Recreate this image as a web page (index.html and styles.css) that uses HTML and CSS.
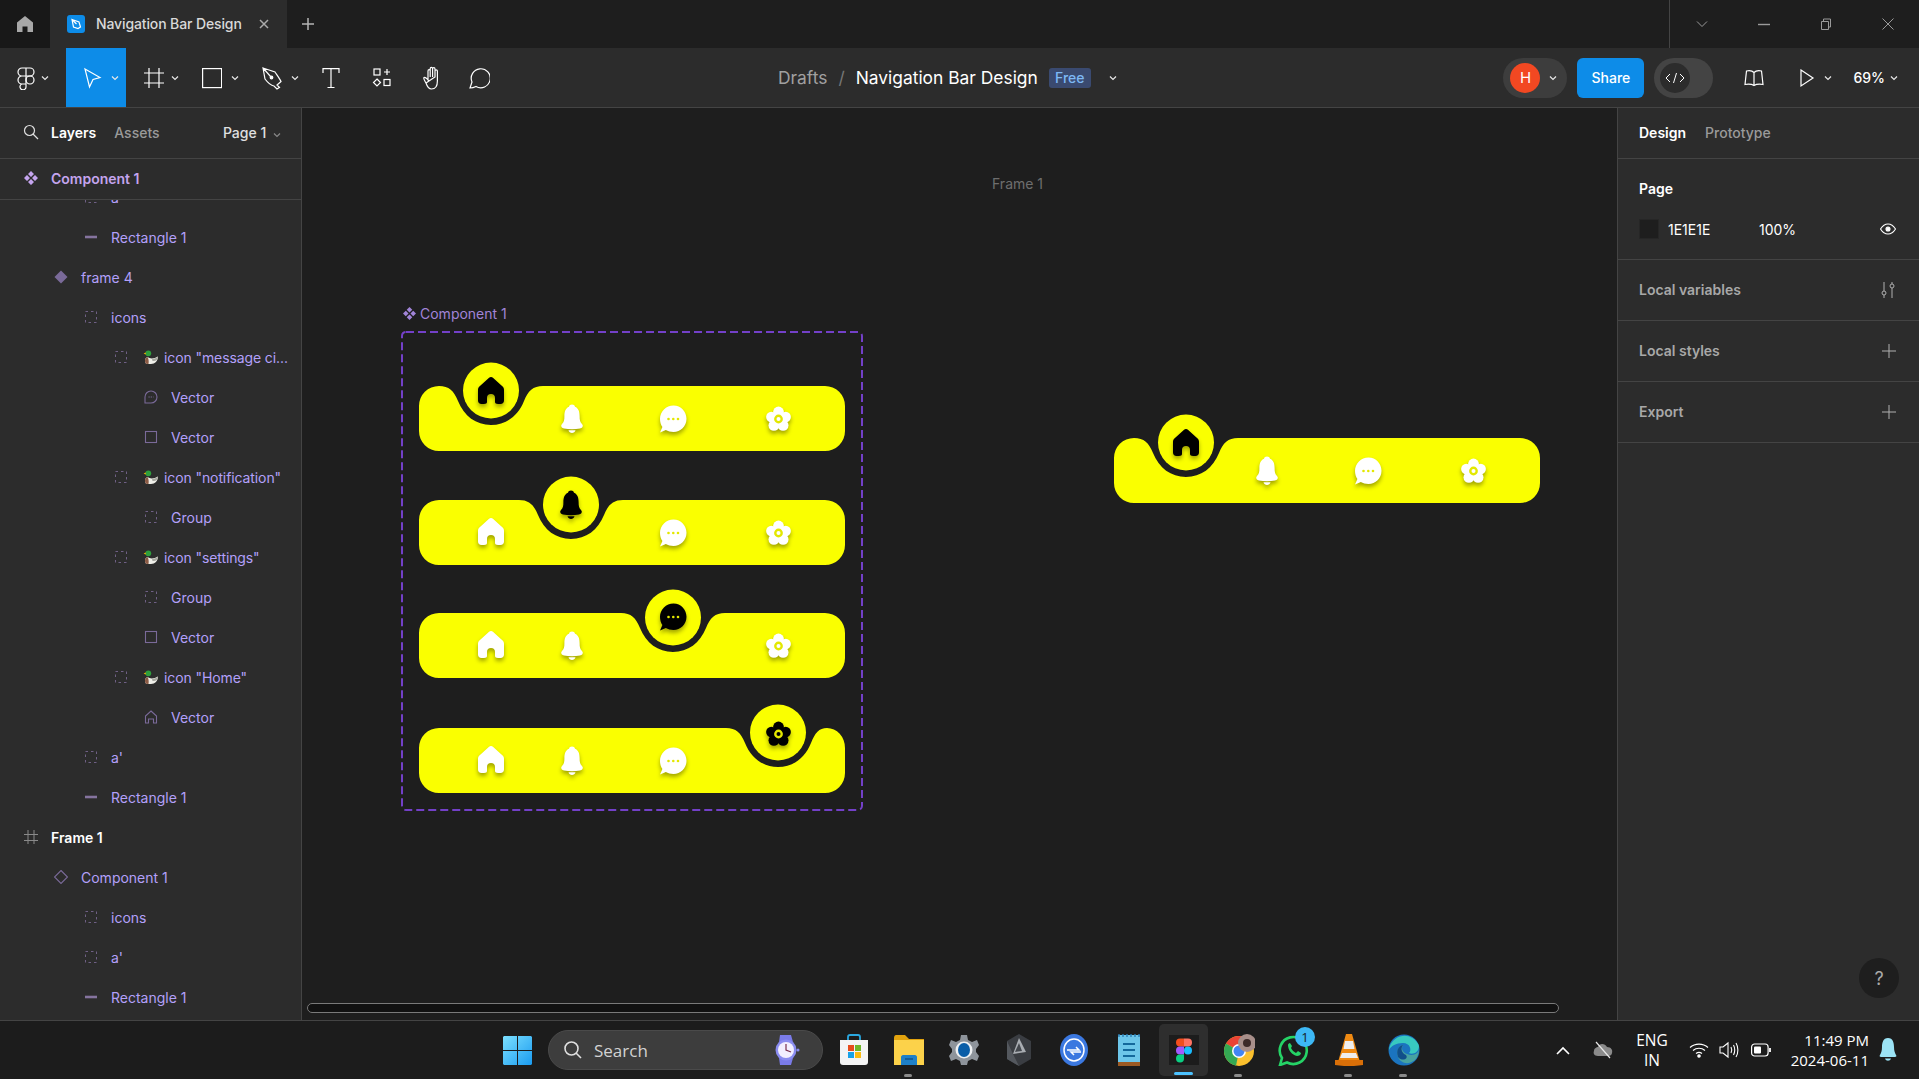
FILE: index.html
```html
<!DOCTYPE html>
<html lang="en">
<head>
<meta charset="utf-8">
<title>Navigation Bar Design</title>
<link rel="stylesheet" href="styles.css">
</head>
<body>
<svg class="defs" width="0" height="0" aria-hidden="true">
  <defs>
    <g id="home"><path d="M0-14C.8-14 1.5-13.6 2.2-13L11.6-4.6C12.6-3.6 13-2.6 13-1.2V9.500C13 11.800 11.600 13 9.500 13H7C5 13 4 12 4 11V7C4 4.400 2.600 3 0 3S-4 4.400-4 7V11C-4 12-5 13-7 13H-9.500C-11.600 13-13 11.800-13 9.500V-1.200C-13-2.600-12.600-3.600-11.600-4.600L-2.200-13C-1.500-13.600-.8-14 0-14Z"/></g>
    <g id="bell"><path d="M0-14.500C-1.600-14.500-2.700-13.600-3-12.200C-6.500-11-7.600-7-7.600-3C-7.600 1-8 3-10 5C-11.500 6.500-11 9-8 9.500C-3 10.400 3 10.400 8 9.500C11 9 11.500 6.500 10 5C8 3 7.600 1 7.600-3C7.600-7 6.500-11 3-12.200C2.700-13.600 1.600-14.500 0-14.500Z"/><path d="M-3.500 11.300H3.500C3 13.200 1.500 14 0 14S-3 13.200-3.500 11.300Z"/></g>
    <g id="msg"><path d="M.5-13.500C8-13.500 13.500-7.500 13.500-.2C13.500 7.200 7.500 13 .5 13C-2.500 13-5 12.200-7.200 11L-13 13.500L-10.600 8C-12.200 5.800-13 2.800-13-.2C-13-7.500-7-13.500 .5-13.500Z"/><circle class="hole" cx="-4.500" cy="0" r="1.300"/><circle class="hole" cx=".3" cy="0" r="1.300"/><circle class="hole" cx="5" cy="0" r="1.300"/></g>
    <g id="gear"><circle cx="0" cy="-7" r="5.400"/><circle cx="7.200" cy="-2" r="5.200"/><circle cx="4.600" cy="6.400" r="5.400"/><circle cx="-4.600" cy="6.400" r="5.400"/><circle cx="-7.200" cy="-2" r="5.200"/><circle cx="0" cy="0" r="7"/><circle class="hole" cx="0" cy="0" r="4.400"/><circle cx="0" cy="0" r="2"/></g>
    <g id="dashed"><rect x="1.500" y="1.500" width="11" height="11" fill="none" stroke="currentColor" stroke-width="1" stroke-dasharray="2.500 3"/></g>
    <g id="comp-glyph"><path d="M7 0L10 3L7 6L4 3ZM3 4L6 7L3 10L0 7ZM11 4L14 7L11 10L8 7ZM7 8L10 11L7 14L4 11Z"/></g>
    <g id="duck"><path d="M3.500 7C6 9 10 9 14 6.500C14 11 11 14 7 14H3.500C1.500 14 1 12.500 1 10.500C1 8.800 2 7.500 3.500 7Z" fill="#eeeee8"/><path d="M1 10.500C1 8.800 2 7.500 3.500 7C4.500 8.500 5 11 4.500 14H3.500C1.500 14 1 12.500 1 10.500Z" fill="#8a5a44"/><path d="M8 9C10.500 9 12.500 8 14 6.500C14 9.500 12 11.500 8.500 11Z" fill="#a5a59e"/><circle cx="4.300" cy="3.300" r="2.900" fill="#2e9e3c"/><path d="M1.800 2.600L-.4 3.600L1.800 4.500Z" fill="#f2b705"/></g>
    <g id="chev"><path d="M1 1.500L4 4.500L7 1.500" fill="none" stroke="currentColor" stroke-width="1.200"/></g>
  </defs>
</svg>

<header class="titlebar">
  <div class="home-tab"><svg width="18" height="18" viewBox="0 0 18 18"><path class="fill-grey" d="M9 1L17 7.500V17H11.500V11.500H6.500V17H1V7.500Z"/></svg></div>
  <div class="file-tab">
    <span class="favicon"><svg width="12" height="12" viewBox="0 0 12 12"><path d="M2 1.500L9 4L10.500 9L8 10.500L3.500 9ZM2 1.500L6.500 6" fill="none" stroke="#fff" stroke-width="1.200"/></svg></span>
    <span class="tab-name">Navigation Bar Design</span>
    <svg class="tab-x" width="12" height="12" viewBox="0 0 12 12"><path d="M2 2L10 10M10 2L2 10" stroke="#aaa" stroke-width="1.500"/></svg>
  </div>
  <svg class="tab-plus" width="14" height="14" viewBox="0 0 14 14"><path d="M7 1V13M1 7H13" stroke="#b5b5b5" stroke-width="1.500"/></svg>
  <div class="win-controls">
    <svg width="14" height="14" viewBox="0 0 14 14"><path d="M2 4.500L7 9.500L12 4.500" fill="none" stroke="#9a9a9a"/></svg>
    <svg width="14" height="14" viewBox="0 0 14 14"><path d="M1 7.500H13" stroke="#9a9a9a" stroke-width="1.400"/></svg>
    <svg width="14" height="14" viewBox="0 0 14 14"><path d="M2.500 4.500H9.500V12.500H2.500ZM4.500 4V2H11.500V10H10" fill="none" stroke="#9a9a9a"/></svg>
    <svg width="14" height="14" viewBox="0 0 14 14"><path d="M1.500 1.500L12.500 12.500M12.500 1.500L1.500 12.500" stroke="#9a9a9a"/></svg>
  </div>
</header>

<nav class="toolbar">
  <div class="tools">
    <div class="tool tool-logo"><svg width="20" height="24" viewBox="0 0 20 24" fill="none" stroke="#fff" stroke-width="1.200"><path d="M10 2H6A4 4 0 0 0 6 10H10ZM10 10H6A4 4 0 0 0 6 18H10ZM10 18H6A3 3 0 1 0 10 20.500ZM10 2H14A4 4 0 0 1 14 10H10Z"/><circle cx="14" cy="14" r="4"/></svg><svg class="chev" width="8" height="6"><use href="#chev"/></svg></div>
    <div class="tool tool-active"><svg width="20" height="24" viewBox="0 0 20 24" fill="none" stroke="#fff" stroke-width="1.200"><path d="M3 3L18 11.500L11 13.500L7.500 21Z"/></svg><svg class="chev" width="8" height="6"><use href="#chev"/></svg></div>
    <div class="tool tool-frame"><svg width="20" height="24" viewBox="0 0 20 24" fill="none" stroke="#fff" stroke-width="1.200"><path d="M0 7H20M0 17H20M5 2V22M15 2V22"/></svg><svg class="chev" width="8" height="6"><use href="#chev"/></svg></div>
    <div class="tool"><svg width="20" height="24" viewBox="0 0 20 24" fill="none" stroke="#fff" stroke-width="1.200"><rect x=".6" y="2.600" width="19" height="19"/></svg><svg class="chev" width="8" height="6"><use href="#chev"/></svg></div>
    <div class="tool"><svg width="20" height="24" viewBox="0 0 20 24" fill="none" stroke="#fff" stroke-width="1.200"><path d="M1 2L13 6C15 9 18 13 19 15.500L15 19L17.500 21.500L15 23L12 20C9 19.500 6 17 3 13ZM1 2L9 11"/><circle cx="9.500" cy="11.500" r="1.300" fill="#fff"/></svg><svg class="chev" width="8" height="6"><use href="#chev"/></svg></div>
    <div class="tool tool-plain"><svg width="20" height="24" viewBox="0 0 20 24" fill="none" stroke="#fff" stroke-width="1.200"><path d="M2 7V2.600H18V7M2 2.600H18M10 2.600V21.500M6.500 21.500H13.500"/></svg></div>
    <div class="tool tool-comp"><svg width="20" height="24" viewBox="0 0 20 24" fill="none" stroke="#fff" stroke-width="1.200"><rect x="2" y="3" width="6" height="6"/><path d="M15 3V9M12 6H18M5 13L8.500 16.500L5 20L1.500 16.500Z"/><rect x="12" y="13.500" width="6" height="6"/></svg></div>
    <div class="tool tool-hand"><svg width="22" height="24" viewBox="0 0 22 24" fill="none" stroke="#fff" stroke-width="1.200"><path d="M4 17C3 15 1 12.500 2 11.500C3.500 10.500 5 13 6 14V5C6 3.200 8.200 3.200 8.200 5V11M8.200 11V2.800C8.200 1 10.600 1 10.600 2.800V11M10.600 11V2.800C10.600 1.200 13 1.200 13 3V11M13 11V5C13 3.400 15.400 3.400 15.400 5V15C15.400 20 13 23 9.500 23C6.500 23 5 20 4 17Z" transform="translate(2 0)"/></svg></div>
    <div class="tool tool-chat"><svg width="22" height="24" viewBox="0 0 22 24" fill="none" stroke="#fff" stroke-width="1.200"><path d="M2 22L4 16A9.500 9.500 0 1 1 8 20.500C6 21.500 4 22 2 22Z"/></svg></div>
  </div>
  <div class="crumbs">
    <span class="crumb-muted">Drafts</span><span class="crumb-sep">/</span><span class="crumb-file">Navigation Bar Design</span><span class="badge">Free</span><svg class="chev crumb-chev" width="8" height="6"><use href="#chev"/></svg>
  </div>
  <div class="actions">
    <div class="avatar-pill"><span class="avatar">H</span><svg class="chev" width="8" height="6"><use href="#chev"/></svg></div>
    <button class="share">Share</button>
    <div class="dev-pill"><span class="dev-knob"><svg width="20" height="12" viewBox="0 0 20 12" fill="none" stroke="#fff"><path d="M5 2L1 6L5 10M15 2L19 6L15 10M11.500 1L8.500 11"/></svg></span></div>
    <svg class="book" width="20" height="18" viewBox="0 0 20 18" fill="none" stroke="#fff" stroke-width="1.200"><path d="M10 3.500C8 1.500 5 1.500 2.500 2L1 15.500C4 15 7.500 15 10 16.500C12.500 15 16 15 19 15.500L17.500 2C15 1.500 12 1.500 10 3.500ZM10 3.500V16.500"/></svg>
    <svg class="play" width="16" height="20" viewBox="0 0 16 20" fill="none" stroke="#fff" stroke-width="1.200"><path d="M2 2L14 10L2 18Z"/></svg>
    <svg class="chev play-chev" width="8" height="6"><use href="#chev"/></svg>
    <span class="zoom-val">69%</span>
    <svg class="chev" width="8" height="6"><use href="#chev"/></svg>
  </div>
</nav>

<main class="workspace">
  <aside class="left-panel">
    <div class="panel-tabs">
      <svg class="search-ic" width="16" height="16" viewBox="0 0 16 16" fill="none" stroke="#e0e0e0" stroke-width="1.200"><circle cx="6.500" cy="6.500" r="5"/><path d="M10 10L15 15"/></svg>
      <span class="tab-on">Layers</span><span class="tab-off">Assets</span>
      <span class="page-pick">Page 1 <svg class="chev-dim" width="8" height="6"><use href="#chev"/></svg></span>
    </div>
    <div class="selected-row">
      <svg class="row-ic comp-ic" width="14" height="14" viewBox="0 0 14 14"><use href="#comp-glyph"/></svg>
      <span>Component 1</span>
    </div>
    <ul class="layers">
      <li class="row d2"><svg class="row-ic dim" width="14" height="14"><use href="#dashed"/></svg>a'</li>
      <li class="row d2"><svg class="row-ic" width="14" height="14" viewBox="0 0 14 14"><path d="M1 7H13" stroke="#85749f" stroke-width="2.600"/></svg>Rectangle 1</li>
      <li class="row d1"><svg class="row-ic" width="14" height="14" viewBox="0 0 14 14"><path d="M7 .5L13.500 7L7 13.500L.5 7Z" fill="#7a6a99"/></svg>frame 4</li>
      <li class="row d2"><svg class="row-ic dim" width="14" height="14"><use href="#dashed"/></svg>icons</li>
      <li class="row d3"><svg class="row-ic dim" width="14" height="14"><use href="#dashed"/></svg><svg class="duck-ic" width="14" height="14"><use href="#duck"/></svg>icon "message ci...</li>
      <li class="row d4"><svg class="row-ic" width="14" height="14" viewBox="0 0 14 14" fill="none" stroke="#7a6a99" stroke-width="1.100"><path d="M1 13V7A6 6 0 1 1 7 13Z"/><path d="M4.500 7H9.500" stroke-dasharray="1.200 1"/></svg>Vector</li>
      <li class="row d4"><svg class="row-ic" width="14" height="14" viewBox="0 0 14 14" fill="none" stroke="#7a6a99" stroke-width="1.100"><rect x="1.500" y="1.500" width="11" height="11"/></svg>Vector</li>
      <li class="row d3"><svg class="row-ic dim" width="14" height="14"><use href="#dashed"/></svg><svg class="duck-ic" width="14" height="14"><use href="#duck"/></svg>icon "notification"</li>
      <li class="row d4"><svg class="row-ic dim" width="14" height="14"><use href="#dashed"/></svg>Group</li>
      <li class="row d3"><svg class="row-ic dim" width="14" height="14"><use href="#dashed"/></svg><svg class="duck-ic" width="14" height="14"><use href="#duck"/></svg>icon "settings"</li>
      <li class="row d4"><svg class="row-ic dim" width="14" height="14"><use href="#dashed"/></svg>Group</li>
      <li class="row d4"><svg class="row-ic" width="14" height="14" viewBox="0 0 14 14" fill="none" stroke="#7a6a99" stroke-width="1.100"><rect x="1.500" y="1.500" width="11" height="11"/></svg>Vector</li>
      <li class="row d3"><svg class="row-ic dim" width="14" height="14"><use href="#dashed"/></svg><svg class="duck-ic" width="14" height="14"><use href="#duck"/></svg>icon "Home"</li>
      <li class="row d4"><svg class="row-ic" width="14" height="14" viewBox="0 0 14 14" fill="none" stroke="#7a6a99" stroke-width="1.100"><path d="M7 1L12.500 6V13H9.500V9H4.500V13H1.500V6Z"/></svg>Vector</li>
      <li class="row d2"><svg class="row-ic dim" width="14" height="14"><use href="#dashed"/></svg>a'</li>
      <li class="row d2"><svg class="row-ic" width="14" height="14" viewBox="0 0 14 14"><path d="M1 7H13" stroke="#85749f" stroke-width="2.600"/></svg>Rectangle 1</li>
      <li class="row d0 row-frame"><svg class="row-ic" width="14" height="14" viewBox="0 0 14 14" fill="none" stroke="#8a8a8a"><path d="M0 4.500H14M0 10.500H14M4 0V14M10 0V14"/></svg>Frame 1</li>
      <li class="row d1"><svg class="row-ic" width="14" height="14" viewBox="0 0 14 14" fill="none" stroke="#7a6a99" stroke-width="1.100"><path d="M7 .5L13.500 7L7 13.500L.5 7Z"/></svg>Component 1</li>
      <li class="row d2"><svg class="row-ic dim" width="14" height="14"><use href="#dashed"/></svg>icons</li>
      <li class="row d2"><svg class="row-ic dim" width="14" height="14"><use href="#dashed"/></svg>a'</li>
      <li class="row d2"><svg class="row-ic" width="14" height="14" viewBox="0 0 14 14"><path d="M1 7H13" stroke="#85749f" stroke-width="2.600"/></svg>Rectangle 1</li>
    </ul>
  </aside>

  <section class="canvas">
    <span class="frame-label">Frame 1</span>
    <div class="comp-label"><svg class="comp-ic-canvas" width="13" height="13" viewBox="0 0 14 14"><use href="#comp-glyph"/></svg>Component 1</div>
    <svg class="variants" width="462" height="480" viewBox="0 0 462 480"><rect x="1" y="1" width="460" height="478" rx="4" fill="none" stroke="#7340c8" stroke-width="2" stroke-dasharray="8 4"/></svg>

    <svg class="bar bar-a" width="426" height="93" viewBox="0 -28 426 93">
      <path class="bar-bg" d="M0 20A20 20 0 0 1 20 0C30 0 35 5 39 15C45 30 57 39 72 39C87 39 99 30 105 15C109 5 114 0 124 0H406A20 20 0 0 1 426 20V45A20 20 0 0 1 406 65H20A20 20 0 0 1 0 45Z"/>
      <circle class="bar-bg" cx="72" cy="4.500" r="28"/>
      <use class="ic ic-on" href="#home" x="72" y="5"/><use class="ic" href="#bell" x="153" y="33"/><use class="ic" href="#msg" x="254" y="33"/><use class="ic" href="#gear" x="359.500" y="33"/>
    </svg>
    <svg class="bar bar-b" width="426" height="93" viewBox="0 -28 426 93">
      <path class="bar-bg" d="M0 20A20 20 0 0 1 20 0H100C110 0 115 5 119 15C125 30 137 39 152 39C167 39 179 30 185 15C189 5 194 0 204 0H406A20 20 0 0 1 426 20V45A20 20 0 0 1 406 65H20A20 20 0 0 1 0 45Z"/>
      <circle class="bar-bg" cx="152" cy="4.500" r="28"/>
      <use class="ic" href="#home" x="72" y="32"/><use class="ic ic-on" href="#bell" x="152" y="5"/><use class="ic" href="#msg" x="254" y="33"/><use class="ic" href="#gear" x="359.500" y="33"/>
    </svg>
    <svg class="bar bar-c" width="426" height="93" viewBox="0 -28 426 93">
      <path class="bar-bg" d="M0 20A20 20 0 0 1 20 0H202C212 0 217 5 221 15C227 30 239 39 254 39C269 39 281 30 287 15C291 5 296 0 306 0H406A20 20 0 0 1 426 20V45A20 20 0 0 1 406 65H20A20 20 0 0 1 0 45Z"/>
      <circle class="bar-bg" cx="254" cy="4.500" r="28"/>
      <use class="ic" href="#home" x="72" y="32"/><use class="ic" href="#bell" x="153" y="33"/><use class="ic ic-on" href="#msg" x="254" y="4"/><use class="ic" href="#gear" x="359.500" y="33"/>
    </svg>
    <svg class="bar bar-d" width="426" height="93" viewBox="0 -28 426 93">
      <path class="bar-bg" d="M0 20A20 20 0 0 1 20 0H307C317 0 322 5 326 15C332 30 344 39 359 39C374 39 386 30 392 15C396 5 400 0 408 0A18 20 0 0 1 426 20V45A20 20 0 0 1 406 65H20A20 20 0 0 1 0 45Z"/>
      <circle class="bar-bg" cx="359" cy="4.500" r="28"/>
      <use class="ic" href="#home" x="72" y="32"/><use class="ic" href="#bell" x="153" y="33"/><use class="ic" href="#msg" x="254" y="33"/><use class="ic ic-on" href="#gear" x="359.500" y="6"/>
    </svg>
    <svg class="bar bar-e" width="426" height="93" viewBox="0 -28 426 93">
      <path class="bar-bg" d="M0 20A20 20 0 0 1 20 0C30 0 35 5 39 15C45 30 57 39 72 39C87 39 99 30 105 15C109 5 114 0 124 0H406A20 20 0 0 1 426 20V45A20 20 0 0 1 406 65H20A20 20 0 0 1 0 45Z"/>
      <circle class="bar-bg" cx="72" cy="4.500" r="28"/>
      <use class="ic ic-on" href="#home" x="72" y="5"/><use class="ic" href="#bell" x="153" y="33"/><use class="ic" href="#msg" x="254" y="33"/><use class="ic" href="#gear" x="359.500" y="33"/>
    </svg>

    <div class="scrollbar"></div>
  </section>

  <aside class="right-panel">
    <div class="rp-tabs"><span class="tab-on">Design</span><span class="tab-off">Prototype</span></div>
    <div class="rp-page">
      <div class="rp-title">Page</div>
      <div class="rp-fill"><span class="swatch"></span><span class="hex">1E1E1E</span><span class="pct">100%</span>
        <svg class="rp-ic" width="16" height="12" viewBox="0 0 16 12" fill="none" stroke="#fff" stroke-width="1.100"><path d="M.5 6C3 2 5.500 1 8 1S13 2 15.500 6C13 10 10.500 11 8 11S3 10 .5 6Z"/><circle cx="8" cy="6" r="2" fill="#fff"/></svg>
      </div>
    </div>
    <div class="rp-section">Local variables
      <svg class="rp-ic" width="16" height="18" viewBox="0 0 16 18" fill="none" stroke="#b0b0b0"><path d="M4 1V10M4 14V17M12 1V3M12 7V17"/><circle cx="4" cy="12" r="2"/><circle cx="12" cy="5" r="2"/></svg>
    </div>
    <div class="rp-section">Local styles
      <svg class="rp-ic" width="14" height="14" viewBox="0 0 14 14" stroke="#b0b0b0"><path d="M7 0V14M0 7H14"/></svg>
    </div>
    <div class="rp-section">Export
      <svg class="rp-ic" width="14" height="14" viewBox="0 0 14 14" stroke="#b0b0b0"><path d="M7 0V14M0 7H14"/></svg>
    </div>
    <span class="help">?</span>
  </aside>
</main>

<footer class="taskbar">
  <svg class="win-logo" width="29" height="29" viewBox="0 0 29 29"><defs><linearGradient id="wg" x1="0" y1="0" x2="1" y2="1"><stop offset="0" stop-color="#7ce0ff"/><stop offset="1" stop-color="#1a9bf0"/></linearGradient></defs><path fill="url(#wg)" d="M1 0H14V14H0V1ZM15 0H28L29 1V14H15ZM0 15H14V29H1L0 28ZM15 15H29V28L28 29H15Z"/></svg>
  <div class="search">
    <svg width="20" height="20" viewBox="0 0 20 20" fill="none" stroke="#e0e0e0" stroke-width="1.600"><circle cx="8.500" cy="8.500" r="6.500"/><path d="M13 13L18 18"/></svg>
    <span class="search-text">Search</span>
    <svg class="watch" width="30" height="32" viewBox="0 0 30 32"><path d="M9 1H20L22 8H8ZM8 24H22L20 31H9Z" fill="#7a7be8"/><circle cx="15" cy="16" r="10.500" fill="#8a8cf0"/><circle cx="15" cy="16" r="8" fill="#f2efff"/><path d="M15 10V16L20 18" stroke="#7a3050" stroke-width="1.200" fill="none"/><circle cx="27" cy="16" r="1.500" fill="#8a8cf0"/></svg>
  </div>
  <div class="apps">
    <span class="app"><svg width="30" height="32" viewBox="0 0 30 32"><path d="M9 6V3C9 1 10 1 11 1H19C20 1 21 1 21 3V6" fill="none" stroke="#2aa8e0" stroke-width="1.800"/><path d="M1 6H29V28C29 30 28 31 26 31H4C2 31 1 30 1 28Z" fill="#f4f4f4"/><rect x="9" y="11" width="6" height="6" fill="#e74c1c"/><rect x="16" y="11" width="6" height="6" fill="#70b62a"/><rect x="9" y="18" width="6" height="6" fill="#19a2e8"/><rect x="16" y="18" width="6" height="6" fill="#fbbb12"/></svg></span>
    <span class="app app-dot"><svg width="32" height="30" viewBox="0 0 32 30"><path d="M1 3C1 1 2 0 3 0H12L16 4H31V29H1Z" fill="#e2a30e"/><rect x="1" y="5" width="30" height="25" fill="#fcd24a"/><path d="M8 22C8 21 9 20 10 20H22C23 20 24 21 24 22V30H8Z" fill="#1e80c8"/><path d="M12 24H20" stroke="#0f4f86" stroke-width="1.400"/></svg></span>
    <span class="app"><svg width="30" height="30" viewBox="0 0 30 30"><path d="M12 0H18L19 5L23 7L28 5L30 10L27 14V17L30 21L28 26L23 24L19 26L18 30H12L11 26L7 24L2 26L0 21L3 17V14L0 10L2 5L7 7L11 5Z" fill="#8e949b"/><circle cx="15" cy="15" r="8.500" fill="#eef0f2"/><ellipse cx="15" cy="15" rx="6" ry="7" fill="#0a5ea8"/></svg></span>
    <span class="app"><svg width="28" height="32" viewBox="0 0 28 32"><path d="M14 0L26 7V25L14 32L2 25V7Z" fill="#3a3d42"/><path d="M14 4L21 18L8 20Z" fill="#a9adb2"/><path d="M14 9L17 17L10 18Z" fill="#43474d"/><path d="M2 7L8 20L14 32L2 25Z" fill="#54585e"/></svg></span>
    <span class="app"><svg width="30" height="32" viewBox="0 0 30 32"><ellipse cx="15" cy="16" rx="14" ry="16" fill="#3b78e0"/><ellipse cx="15" cy="16" rx="10" ry="11" fill="none" stroke="#fff" stroke-width="1.500"/><path d="M8 16H20L17 13M22 18H12L15 21" fill="none" stroke="#fff" stroke-width="1.500"/></svg></span>
    <span class="app"><svg width="24" height="34" viewBox="0 0 24 34"><rect x="1" y="2" width="22" height="28" rx="1" fill="#6dc6ea"/><rect x="1" y="29" width="22" height="4" fill="#9c5a24"/><path d="M2 1V4M6 1V4M10 1V4M14 1V4M18 1V4M22 1V4" stroke="#2a7fb5" stroke-width="1.400"/><path d="M6 11H18M6 17H18M6 23H18" stroke="#14689c" stroke-width="2"/></svg></span>
    <span class="app app-figma"><span class="figma-box"><svg width="16" height="25" viewBox="0 0 16 24"><path d="M8 0H4A4 4 0 0 0 4 8H8Z" fill="#f24e1e"/><path d="M8 0H12A4 4 0 0 1 12 8H8Z" fill="#ff7262"/><path d="M8 8H4A4 4 0 0 0 4 16H8Z" fill="#a259ff"/><circle cx="12" cy="12" r="4" fill="#1abcfe"/><path d="M8 16H4A4 4 0 1 0 8 20Z" fill="#0acf83"/></svg></span><i class="figma-line"></i></span>
    <span class="app app-dot"><svg width="32" height="32" viewBox="0 0 32 32"><circle cx="16" cy="17" r="15" fill="#fbc02d"/><path d="M16 17L3 9.500A15 15 0 0 1 29 9.500Z" fill="#ea4335"/><path d="M16 17L3 9.500A15 15 0 0 0 13 31.700Z" fill="#34a853"/><circle cx="16" cy="17" r="7" fill="#fff"/><circle cx="16" cy="17" r="5.500" fill="#4285f4"/><circle cx="24" cy="9" r="9" fill="#a88f8a"/><circle cx="24" cy="9" r="4" fill="#3d2a28"/></svg></span>
    <span class="app app-wa"><svg width="34" height="32" viewBox="0 0 34 32" fill="none"><path d="M3 31L5 24A13.500 13.500 0 1 1 10 28.500Z" stroke="#25d366" stroke-width="2.600"/><path d="M11 11C11 10 12 9 13 9L15 12L14 14C15 16 17 18 19 19L21 17L24 19C24 21 22 22 20 22C15 21 11 16 11 11Z" fill="#25d366"/></svg><span class="wa-badge">1</span></span>
    <span class="app app-dot"><svg width="28" height="32" viewBox="0 0 28 32"><path d="M11 0H17L25 28H3Z" fill="#f08a12"/><path d="M10 7H18L19.500 15H8.500Z" fill="#eee"/><path d="M7 19H21L23 24H5Z" fill="#eee"/><path d="M0 26H28V31C20 32.500 8 32.500 0 31Z" fill="#d96f08"/></svg></span>
    <span class="app app-dot"><svg width="32" height="32" viewBox="0 0 32 32"><circle cx="16" cy="16" r="15.500" fill="#1b74bf"/><path d="M1 16A15.500 15.500 0 0 1 31 12C31 19 24 21 21 19C24 16 22 9 15 9C8 9 3 12 1 16Z" fill="#38c9c0"/><path d="M31 14C31 21 24 22 19 20C14 18 13 14 15 11C10 12 8 18 10 23C13 30 21 31 27 26C30 23 31 18 31 14Z" fill="#7edb7a" opacity=".45"/><path d="M10 23C8 17 10 12 15 11C12 15 14 19 18 21C21 25 14 28 10 23Z" fill="#114f8a"/></svg></span>
  </div>
  <div class="tray">
    <svg class="tray-up" width="14" height="9" viewBox="0 0 14 9" fill="none" stroke="#fff" stroke-width="1.600"><path d="M1 8L7 2L13 8"/></svg>
    <svg class="tray-cloud" width="20" height="18" viewBox="0 0 20 18"><path d="M5 15C1 15 0 12 1 10C1 7 4 6 5 6C6 2 12 2 14 6C18 6 20 9 19 12C19 14 17 15 15 15Z" fill="#8a8a8a"/><path d="M3 1L17 17" stroke="#e8e8e8" stroke-width="1.200"/></svg>
    <div class="lang">ENG<br>IN</div>
    <svg class="tray-wifi" width="20" height="16" viewBox="0 0 20 16" fill="none" stroke="#fff" stroke-width="1.200"><path d="M1 5.500C6 1 14 1 19 5.500M4 8.500C7.500 5.500 12.500 5.500 16 8.500M7 11.500C9 10 11 10 13 11.500"/><circle cx="10" cy="14" r="1.200" fill="#fff"/></svg>
    <svg class="tray-vol" width="20" height="20" viewBox="0 0 20 20" fill="none" stroke="#fff" stroke-width="1.100"><path d="M1 7H4L9 3V17L4 13H1ZM12 7C13 9 13 11 12 13M14.500 5C16 8 16 12 14.500 15M17 3C19.500 7 19.500 13 17 17"/></svg>
    <svg class="tray-bat" width="20" height="14" viewBox="0 0 20 14" fill="none" stroke="#fff" stroke-width="1.200"><rect x=".6" y="1" width="16.500" height="12" rx="3"/><rect x="3" y="3.500" width="7" height="7" rx="1" fill="#fff" stroke="none"/><path d="M19 5V9" stroke-width="1.800"/></svg>
    <div class="clock">11:49 PM<br>2024-06-11</div>
    <svg class="tray-bell" width="18" height="24" viewBox="0 0 18 24" fill="#9be3f5"><path d="M9 0C4 0 3 5 3 9C3 13 2 15 1 17C0 18 1 19 2 19H16C17 19 18 18 17 17C16 15 15 13 15 9C15 5 14 0 9 0ZM6 20.500H12C11 23.500 7 23.500 6 20.500Z"/></svg>
  </div>
</footer>
</body>
</html>
```
FILE: styles.css
```css
* { box-sizing: border-box; }
html, body { margin: 0; padding: 0; }
body {
  width: 1919px; height: 1079px; overflow: hidden;
  display: flex; flex-direction: column;
  background: #1e1e1e; color: #fff;
  font-family: Inter, "Noto Sans", sans-serif; font-size: 14px;
}
.defs { position: absolute; }
.fill-grey { fill: #a8a8a8; }
.chev { color: #e8e8e8; flex: none; }
.chev-dim { color: #888; margin-left: 3px; }

/* title bar */
.titlebar { height: 48px; flex: none; display: flex; align-items: center; background: #1e1e1e; }
.home-tab { width: 50px; height: 48px; display: flex; align-items: center; justify-content: center; background: #181818; }
.file-tab { width: 237px; height: 48px; display: flex; align-items: center; background: #2c2c2c; padding-left: 17px; }
.favicon { width: 18px; height: 18px; border-radius: 3px; background: #0d8ce8; display: flex; align-items: center; justify-content: center; }
.tab-name { margin-left: 11px; margin-bottom: 2px; font-weight: 500; color: #d9d9d9; white-space: nowrap; letter-spacing: -.12px; }
.tab-x { margin-left: 16px; }
.tab-plus { margin-left: 14px; }
.win-controls { margin-left: auto; width: 250px; height: 48px; border-left: 1px solid #444; display: flex; align-items: center; gap: 48px; padding-left: 25px; }

/* tool bar */
.toolbar { height: 60px; flex: none; display: grid; grid-template-columns: 778px 1fr auto; align-items: center; background: #2c2c2c; border-bottom: 1px solid #444; }
.tools { display: grid; grid-template-columns: 66px 60px 60px 60px 60px 50px 50px 49px 50px; height: 59px; }
.tool { display: flex; align-items: center; gap: 9px; padding-left: 16px; }
.tool-logo { gap: 5px; }
.tool-active { background: #0d8ce8; color: #fff; }
.tool-frame { padding-left: 18px; gap: 7px; }
.tool-plain { padding-left: 15px; }
.tool-comp { padding-left: 16px; }
.tool-hand { padding-left: 14px; }
.tool-chat { padding-left: 13px; }
.crumbs { display: flex; align-items: center; font-size: 17.400px; white-space: nowrap; }
.crumb-muted { color: #a0a0a0; }
.crumb-sep { color: #777; margin: 0 11px; }
.crumb-file { color: #fff; }
.badge { margin-left: 11px; width: 42px; height: 20px; border-radius: 3px; background: #3a4a70; color: #7db8f5; font-size: 14px; font-weight: 500; display: flex; align-items: center; justify-content: center; }
.crumb-chev { margin-left: 18px; }
.actions { display: flex; align-items: center; padding-right: 21px; }
.avatar-pill { width: 64px; height: 40px; border-radius: 20px; background: #3d3d3d; display: flex; align-items: center; padding-left: 7px; gap: 9px; }
.avatar { width: 30px; height: 30px; border-radius: 50%; background: #f24822; display: flex; align-items: center; justify-content: center; font-size: 15px; }
.share { margin-left: 10px; width: 67px; height: 40px; border: 0; border-radius: 6px; background: #0d8ce8; color: #fff; font: 500 14px Inter, sans-serif; }
.dev-pill { margin-left: 10px; width: 59px; height: 40px; border-radius: 20px; background: #444; padding: 5px 6px; }
.dev-knob { width: 30px; height: 30px; border-radius: 50%; background: #2c2c2c; display: flex; align-items: center; justify-content: center; }
.book { margin-left: 31px; }
.play { margin-left: 35px; }
.play-chev { margin-left: 9px; }
.zoom-val { margin-left: 21px; font-weight: 500; }
.actions .zoom-val + .chev { margin-left: 5px; }

/* workspace */
.workspace { flex: 1; min-height: 0; display: flex; }
.left-panel { width: 302px; flex: none; background: #2c2c2c; border-right: 1px solid #444; display: flex; flex-direction: column; overflow: hidden; }
.panel-tabs { height: 51px; flex: none; display: flex; align-items: center; padding: 0 0 2px 23px; border-bottom: 1px solid #444; }
.search-ic { margin-right: 12px; }
.tab-on { font-weight: 600; color: #fff; }
.tab-off { font-weight: 500; color: #9a9a9a; margin-left: 19px; }
.panel-tabs .tab-off { margin-left: 18px; }
.page-pick { margin-left: auto; padding-right: 20px; color: #e0e0e0; font-weight: 500; }
.selected-row { height: 41px; flex: none; display: flex; align-items: center; gap: 13px; padding: 0 0 2px 24px; border-bottom: 1px solid #444; color: #c4a4ee; font-weight: 600; }
.comp-ic { fill: #c4a4ee; }
.layers { list-style: none; margin: -22px 0 0; padding: 0; flex: none; clip-path: inset(22px 0 0 0); }
.row { height: 40px; display: flex; align-items: center; gap: 13px; padding-bottom: 2px; color: #b3a0fa; white-space: nowrap; }
.row-ic { flex: none; }
.row-ic.dim { color: #6f6085; }
.duck-ic { flex: none; margin-left: 3px; margin-right: -7px; overflow: visible; }
.d0 { padding-left: 24px; }
.d1 { padding-left: 54px; }
.d2 { padding-left: 84px; }
.d3 { padding-left: 114px; letter-spacing: -.1px; }
.d4 { padding-left: 144px; }
.row-frame { color: #fff; font-weight: 600; }

/* canvas: everything on it sits at free coordinates */
.canvas { flex: 1; position: relative; background: #1e1e1e; }
.frame-label { position: absolute; left: 690px; top: 67px; color: #6e6e6e; }
.comp-label { position: absolute; left: 101px; top: 197px; display: flex; align-items: center; gap: 4px; color: #a184d8; }
.comp-ic-canvas { fill: #a184d8; }
.variants { position: absolute; left: 99px; top: 223px; }
.bar { position: absolute; overflow: visible; }
.bar-a { left: 117px; top: 250.300px; }
.bar-b { left: 117px; top: 364.300px; }
.bar-c { left: 117px; top: 477.300px; }
.bar-d { left: 117px; top: 592.300px; }
.bar-e { left: 812px; top: 302.300px; }
.bar-bg { fill: #faff00; }
.ic { fill: #fff; filter: drop-shadow(0 3px 2px rgba(0,0,0,.35)); }
.ic-on { fill: #000; }
.hole { fill: #e3e800; }
.ic-on .hole { fill: #faff00; }
.scrollbar { position: absolute; left: 5px; top: 895px; width: 1252px; height: 10px; border-radius: 5px; background: #111; border: 1.500px solid #7a7a7a; }

/* right panel */
.right-panel { width: 302px; flex: none; background: #2c2c2c; border-left: 1px solid #444; position: relative; }
.rp-tabs { height: 51px; display: flex; align-items: center; padding: 0 0 2px 21px; border-bottom: 1px solid #444; }
.rp-page { height: 101px; padding: 21px 21px 0; border-bottom: 1px solid #444; }
.rp-title { font-weight: 600; color: #fff; line-height: 18px; }
.rp-fill { margin-top: 21px; display: flex; align-items: center; height: 20px; }
.swatch { width: 20px; height: 20px; background: #1e1e1e; border: 1px solid #262626; }
.hex { margin-left: 9px; width: 91px; }
.pct { color: #fff; }
.rp-section { height: 61px; padding: 0 21px 1px; display: flex; align-items: center; justify-content: space-between; border-bottom: 1px solid #444; font-weight: 600; color: #a8a8a8; }
.rp-ic { margin-right: 2px; }
.rp-fill .rp-ic { margin-left: auto; }
.help { position: absolute; left: 241px; top: 850px; width: 40px; height: 40px; border-radius: 50%; background: #1e1e1e; color: #aaa; font-size: 18px; display: flex; align-items: center; justify-content: center; }

/* task bar */
.taskbar { height: 59px; flex: none; display: flex; align-items: center; background: #1c1c1c; border-top: 1px solid #444; font-family: "Open Sans", sans-serif; padding-left: 503px; }
.win-logo { flex: none; }
.search { margin-left: 16px; width: 275px; height: 40px; border-radius: 20px; background: #3d3d3d; border: 1px solid #4a4a4a; display: flex; align-items: center; padding-left: 14px; }
.search-text { margin-left: 11px; font-size: 17px; color: #d2d2d2; }
.watch { margin-left: auto; margin-right: 21px; }
.apps { display: flex; align-items: center; margin-left: 8px; }
.app { width: 45px; margin-right: 10px; height: 52px; display: flex; align-items: center; justify-content: center; position: relative; flex: none; }
.app-dot::after { content: ""; position: absolute; left: 18px; bottom: -1px; width: 8px; height: 3px; border-radius: 2px; background: #8a8a8a; }
.app-figma { width: 49px; margin: 0 8px 0 -2px; background: #2e2e2e; border-radius: 5px; }
.figma-box { width: 30px; height: 30px; background: #1c1c1c; display: flex; align-items: center; justify-content: center; }
.figma-line { position: absolute; left: 15px; bottom: 1px; width: 19px; height: 3px; border-radius: 2px; background: #4cc2ff; }
.wa-badge { position: absolute; left: 24px; top: 3px; width: 20px; height: 20px; border-radius: 50%; background: #3db8f5; color: #16222a; font-size: 13px; display: flex; align-items: center; justify-content: center; }
.tray { flex: 1; display: flex; align-items: center; height: 100%; color: #fff; font-size: 15px; }
.tray-up { margin-left: 120px; }
.tray-cloud { margin-left: 23px; }
.lang { margin-left: 13px; width: 52px; text-align: center; line-height: 20px; font-size: 15.500px; }
.tray-wifi { margin-left: 11px; }
.tray-vol { margin-left: 10px; }
.tray-bat { margin-left: 12px; }
.clock { margin-left: 10px; width: 88px; text-align: right; line-height: 20px; }
.tray-bell { margin-left: 10px; }
```
